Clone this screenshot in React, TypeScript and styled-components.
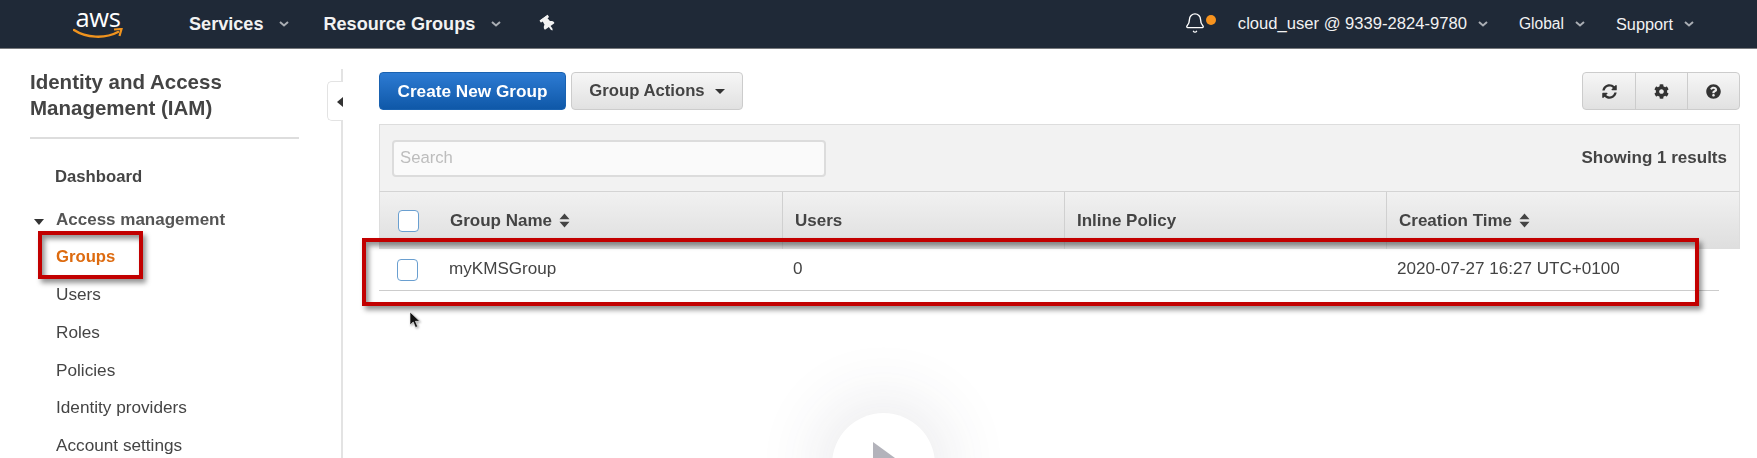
import React from 'react'
import styled, { createGlobalStyle } from 'styled-components'
import { Bell } from 'lucide-react'
import { FaCog, FaQuestionCircle, FaSyncAlt, FaThumbtack } from 'react-icons/fa'

const GlobalStyle = createGlobalStyle`
  html, body {
    margin: 0;
    padding: 0;
    background: #fff;
    overflow: hidden;
  }
  * {
    box-sizing: border-box;
  }
`

const Page = styled.div`
  position: relative;
  width: 1757px;
  height: 458px;
  overflow: hidden;
  font-family: 'Liberation Sans', Arial, sans-serif;
  color: #444;
  filter: blur(0.45px);
`

const TopBar = styled.header`
  display: flex;
  align-items: center;
  height: 49px;
  padding: 0 63px 0 73px;
  background: #1f2937;
  border-bottom: 1px solid #77797c;
  color: #f2f2f2;
`

const LogoWrap = styled.div`
  position: relative;
  width: 50px;
  height: 48px;
  margin-right: 66px;
`

const LogoText = styled.span`
  display: block;
  text-align: center;
  font-family: 'Open Sans', sans-serif;
  font-size: 25.5px;
  line-height: 34px;
  letter-spacing: -0.3px;
  color: #fff;
`

const Smile = styled.svg`
  position: absolute;
  left: 0;
  top: 28px;
`

const NavMenu = styled.div<{ $gap: number; $bold?: boolean; $size?: number }>`
  display: flex;
  align-items: center;
  gap: ${({ $bold }) => ($bold ? 16 : 11)}px;
  margin-right: ${({ $gap }) => $gap}px;
  font-size: ${({ $bold, $size }) => $size ?? ($bold ? 18.1 : 16.6)}px;
  font-weight: ${({ $bold }) => ($bold ? 700 : 400)};
  white-space: nowrap;
`

const Pin = styled(FaThumbtack)`
  width: 16px;
  height: 16px;
  color: #f2f2f2;
  transform: rotate(-35deg);
`

const RightMenus = styled.div`
  display: flex;
  align-items: center;
  margin-left: auto;
`

const BellWrap = styled.div`
  position: relative;
  width: 54px;
  height: 24px;
  color: #fff;
`

const BellDot = styled.span`
  position: absolute;
  left: 22px;
  top: 3px;
  width: 10px;
  height: 10px;
  border-radius: 50%;
  background: #f7931e;
`

const Body = styled.div`
  display: flex;
  align-items: flex-start;
`

const Sidebar = styled.aside`
  position: relative;
  flex: 0 0 343px;
  height: 389px;
  margin-top: 20px;
  padding: 0 42px 0 30px;
  border-right: 2px solid #e3e3e3;
`

const SideTitle = styled.h2`
  margin: 0;
  padding-bottom: 16px;
  border-bottom: 2px solid #ddd;
  font-size: 20.5px;
  line-height: 26px;
  font-weight: 700;
  color: #444;
`

const CollapseTab = styled.div`
  position: absolute;
  right: -2px;
  top: 12px;
  width: 16px;
  height: 40px;
  background: #fff;
  border: 1px solid #e3e3e3;
  border-right: none;
  border-radius: 5px 0 0 5px;
`

const TabArrow = styled.span`
  position: absolute;
  left: 9px;
  top: 15px;
  border-style: solid;
  border-width: 5px 6px 5px 0;
  border-color: transparent #333 transparent transparent;
`

const NavList = styled.nav`
  display: flex;
  flex-direction: column;
  margin-top: 19px;
  padding-left: 26px;
`

const NavItem = styled.a<{ $active?: boolean; $strong?: boolean }>`
  display: flex;
  align-items: center;
  height: 37.7px;
  margin-left: ${({ $strong }) => ($strong ? -1 : 0)}px;
  font-size: ${({ $active, $strong }) => ($active || $strong ? 16.7 : 17.2)}px;
  font-weight: ${({ $active, $strong }) => ($active || $strong ? 700 : 400)};
  color: ${({ $active }) => ($active ? '#dd6b10' : '#444')};
`

const SectionHead = styled.div`
  position: relative;
  display: flex;
  align-items: center;
  height: 35.5px;
  margin-top: 7px;
  font-size: 17px;
  font-weight: 700;
  color: #555;
`

const SectionCaret = styled.span`
  position: absolute;
  left: -22px;
  top: 16px;
  border-style: solid;
  border-width: 6px 5.5px 0 5.5px;
  border-color: #333 transparent transparent transparent;
`

const Main = styled.main`
  flex: 1;
  padding: 23px 17px 0 36px;
`

const Toolbar = styled.div`
  display: flex;
  align-items: center;
  gap: 5px;
  height: 38px;
`

const PrimaryButton = styled.button`
  width: 187px;
  height: 38px;
  padding: 0;
  border: 1px solid #1a62b0;
  border-radius: 4px;
  background: linear-gradient(#2d7bd3, #0f58a8);
  color: #fff;
  font: 700 17.2px 'Liberation Sans', Arial, sans-serif;
`

const SecondaryButton = styled.button`
  display: flex;
  align-items: center;
  justify-content: center;
  gap: 10px;
  width: 172px;
  height: 38px;
  padding: 0;
  border: 1px solid #ccc;
  border-radius: 4px;
  background: linear-gradient(#f6f6f6, #e1e1e1);
  color: #444;
  font: 700 16.7px 'Liberation Sans', Arial, sans-serif;
`

const DownCaret = styled.span`
  border-style: solid;
  border-width: 5px 5px 0 5px;
  border-color: #333 transparent transparent transparent;
`

const IconGroup = styled.div`
  display: flex;
  margin-left: auto;
  height: 38px;
  border: 1px solid #ccc;
  border-radius: 4px;
  background: linear-gradient(#f6f6f6, #e1e1e1);
`

const IconCell = styled.div`
  display: flex;
  align-items: center;
  justify-content: center;
  width: 52px;
  color: #333;
  font-size: 15px;

  & + & {
    border-left: 1px solid #ccc;
  }
`

const Panel = styled.section`
  margin-top: 14px;
`

const FilterBar = styled.div`
  display: flex;
  align-items: center;
  justify-content: space-between;
  height: 67px;
  padding: 0 12px 0 12px;
  background: #f2f2f2;
  border: 1px solid #ddd;
  border-bottom: none;
`

const SearchInput = styled.div`
  display: flex;
  align-items: center;
  width: 434px;
  height: 37px;
  padding-left: 6px;
  background: #fafafa;
  border: 2px solid #dcdcdc;
  border-radius: 4px;
  color: #bdbdbd;
  font-size: 16.7px;
`

const ResultCount = styled.span`
  font-size: 17px;
  font-weight: 700;
  color: #444;
`

const columns = '58px 344px 282px 322px 1fr'

const HeadRow = styled.div`
  display: grid;
  grid-template-columns: ${columns};
  height: 58px;
  background: linear-gradient(#f1f1f1, #dedede);
  border: 1px solid #ddd;
  border-top: 1px solid #d4d4d4;
  border-bottom: none;
`

const HeadCell = styled.div`
  display: flex;
  align-items: center;
  gap: 7px;
  padding-left: 12px;
  font-size: 17px;
  font-weight: 700;
  color: #444;

  & + & {
    border-left: 1px solid #d0d0d0;
  }
`

const CheckCell = styled.div`
  display: flex;
  align-items: center;
  padding-left: 18px;
`

const Check = styled.span`
  display: block;
  width: 21px;
  height: 22px;
  background: #fff;
  border: 1.5px solid #6a9fd0;
  border-radius: 4px;
`

const DataRow = styled.div`
  display: grid;
  grid-template-columns: ${columns};
  width: 1340px;
  height: 42px;
  border-bottom: 1px solid #ccc;
`

const DataCell = styled.div`
  display: flex;
  align-items: center;
  padding-left: 12px;
  padding-bottom: 1px;
  font-size: 17.1px;
  color: #444;
`

const Callout = styled.div<{ $x: number; $y: number; $w: number; $h: number }>`
  position: absolute;
  left: ${({ $x }) => $x}px;
  top: ${({ $y }) => $y}px;
  width: ${({ $w }) => $w}px;
  height: ${({ $h }) => $h}px;
  border: 4px solid #c20000;
  box-shadow: 3px 4px 5px rgba(0, 0, 0, 0.42), inset 3px 4px 5px rgba(0, 0, 0, 0.42);
`

const Cursor = styled.svg`
  position: absolute;
  left: 409px;
  top: 311px;
  filter: drop-shadow(1px 1px 1px rgba(0, 0, 0, 0.35));
`

const PlayBadge = styled.div`
  position: absolute;
  left: 832px;
  top: 413px;
  width: 103px;
  height: 103px;
  border-radius: 50%;
  background: #fff;
  box-shadow: 0 0 70px 10px rgba(60, 60, 80, 0.12);
`

const PlayIcon = styled.svg`
  position: absolute;
  left: 41px;
  top: 29px;
`

const Chevron = () => (
  <svg width="10" height="6" viewBox="0 0 10 6">
    <path d="M1 1l4 3.5L9 1" fill="none" stroke="#a9adb3" strokeWidth="2" />
  </svg>
)

const SortIcon = () => (
  <svg width="11" height="15" viewBox="0 0 11 15">
    <path d="M5.5 0.5L10.5 6.3H0.5zM5.5 14.5L0.5 8.7H10.5z" fill="#444" />
  </svg>
)

const sideLinks = ['Users', 'Roles', 'Policies', 'Identity providers', 'Account settings']

export default function App() {
  return (
    <Page>
      <GlobalStyle />
      <TopBar>
        <LogoWrap>
          <LogoText>aws</LogoText>
          <Smile width="50" height="12" viewBox="0 0 50 12">
            <path d="M1 2c12 8 31 9 44 2" fill="none" stroke="#f0931e" strokeWidth="2.4" strokeLinecap="round" />
            <path d="M41 1.5l7.5-.5-2 7" fill="none" stroke="#f0931e" strokeWidth="2.2" />
          </Smile>
        </LogoWrap>
        <NavMenu $bold $gap={34}>
          Services <Chevron />
        </NavMenu>
        <NavMenu $bold $gap={39}>
          Resource Groups <Chevron />
        </NavMenu>
        <Pin />
        <RightMenus>
          <BellWrap>
            <Bell size={22} strokeWidth={1.5} />
            <BellDot />
          </BellWrap>
          <NavMenu $gap={31}>
            cloud_user @ 9339-2824-9780 <Chevron />
          </NavMenu>
          <NavMenu $gap={31} $size={15.6}>
            Global <Chevron />
          </NavMenu>
          <NavMenu $gap={0} $size={16.3}>
            Support <Chevron />
          </NavMenu>
        </RightMenus>
      </TopBar>
      <Body>
        <Sidebar>
          <SideTitle>
            Identity and Access
            <br />
            Management (IAM)
          </SideTitle>
          <CollapseTab>
            <TabArrow />
          </CollapseTab>
          <NavList>
            <NavItem $strong>Dashboard</NavItem>
            <SectionHead>
              <SectionCaret />
              Access management
            </SectionHead>
            <NavItem $active>Groups</NavItem>
            {sideLinks.map((label) => (
              <NavItem key={label}>{label}</NavItem>
            ))}
          </NavList>
        </Sidebar>
        <Main>
          <Toolbar>
            <PrimaryButton>Create New Group</PrimaryButton>
            <SecondaryButton>
              Group Actions <DownCaret />
            </SecondaryButton>
            <IconGroup>
              <IconCell>
                <FaSyncAlt />
              </IconCell>
              <IconCell>
                <FaCog />
              </IconCell>
              <IconCell>
                <FaQuestionCircle />
              </IconCell>
            </IconGroup>
          </Toolbar>
          <Panel>
            <FilterBar>
              <SearchInput>Search</SearchInput>
              <ResultCount>Showing 1 results</ResultCount>
            </FilterBar>
            <HeadRow>
              <CheckCell>
                <Check />
              </CheckCell>
              <HeadCell>
                Group Name <SortIcon />
              </HeadCell>
              <HeadCell>Users</HeadCell>
              <HeadCell>Inline Policy</HeadCell>
              <HeadCell>
                Creation Time <SortIcon />
              </HeadCell>
            </HeadRow>
            <DataRow>
              <CheckCell>
                <Check />
              </CheckCell>
              <DataCell>myKMSGroup</DataCell>
              <DataCell>0</DataCell>
              <DataCell />
              <DataCell>2020-07-27 16:27 UTC+0100</DataCell>
            </DataRow>
          </Panel>
        </Main>
      </Body>
      <Callout $x={38} $y={231} $w={105} $h={48} />
      <Callout $x={362} $y={238} $w={1337} $h={68} />
      <Cursor width="12" height="18" viewBox="0 0 12 18">
        <path d="M1 1v13l3.2-3 2.3 5.5 2.2-1-2.3-5.2h4.4z" fill="#111" stroke="#fff" strokeWidth="0.6" />
      </Cursor>
      <PlayBadge>
        <PlayIcon width="34" height="50" viewBox="0 0 34 50">
          <path d="M0 0L33 24L0 50z" fill="#b3b3bb" />
        </PlayIcon>
      </PlayBadge>
    </Page>
  )
}
